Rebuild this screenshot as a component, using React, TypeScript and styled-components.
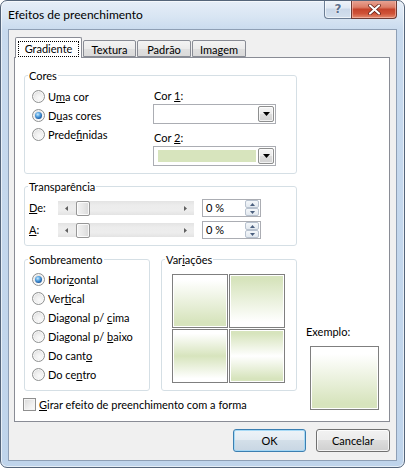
import React from "react";
import styled, { createGlobalStyle } from "styled-components";

const GREEN = "#d7e4bd";

const GlobalStyle = createGlobalStyle`
  html, body { margin: 0; padding: 0; background: #ffffff; }
  body {
    font-family: Lato, "Noto Sans", "Open Sans", sans-serif;
    font-size: 11px;
    color: #000;
  }
  *, *::before, *::after { box-sizing: border-box; }
`;

const Window = styled.div`
  width: 405px;
  height: 468px;
  border: 1px solid #55657a;
  border-radius: 7px;
  background: linear-gradient(180deg, #e6eef8 0px, #d8e5f3 16px, #c8daee 30px, #bfd4eb 100%);
  box-shadow: inset 0 0 0 1px rgba(255, 255, 255, 0.6);
  padding: 0 7px 7px 7px;
  display: flex;
  flex-direction: column;
  overflow: hidden;
`;

const TitleBar = styled.div`
  height: 28px;
  display: flex;
  align-items: flex-start;
`;

const TitleText = styled.div`
  flex: 1;
  line-height: 28px;
  font-size: 12px;
  color: #000;
`;

const CaptionButtons = styled.div`
  display: flex;
  margin-top: -1px;
  height: 19px;
`;

const HelpButton = styled.div`
  width: 27px;
  height: 19px;
  border: 1px solid #6b7d94;
  border-top: none;
  border-right: none;
  border-radius: 0 0 0 4px;
  background: linear-gradient(180deg, #f1f5fa 0%, #dfe8f3 45%, #c9d7e8 50%, #d3e0ee 100%);
  box-shadow: inset 0 0 0 1px rgba(255, 255, 255, 0.6);
  display: flex;
  align-items: center;
  justify-content: center;
  font-family: "DejaVu Sans", sans-serif;
  font-weight: bold;
  font-size: 12px;
  color: #5b6f8b;
  text-shadow: 0 0 1px #fff, 0 0 2px #fff;
`;

const CloseButton = styled.div`
  width: 46px;
  height: 19px;
  border: 1px solid #6e3a33;
  border-top: none;
  border-radius: 0 0 4px 0;
  background: linear-gradient(180deg, #e9a899 0%, #dc7d67 40%, #c5432b 52%, #cf5237 75%, #e38a6e 100%);
  box-shadow: inset 0 0 0 1px rgba(255, 210, 200, 0.5);
  display: flex;
  align-items: center;
  justify-content: center;
`;

const Client = styled.div`
  flex: 1;
  background: #f0f0f0;
  border: 1px solid #8e9fb5;
  padding: 7px 6px 8px 5px;
  display: flex;
  flex-direction: column;
`;

const TabRow = styled.div`
  height: 20px;
  display: flex;
  align-items: flex-end;
  padding-left: 1px;
  position: relative;
  z-index: 2;
`;

const Tab = styled.div<{ $active?: boolean; $w: number }>`
  width: ${(p) => p.$w}px;
  height: ${(p) => (p.$active ? 21 : 17)}px;
  margin-bottom: ${(p) => (p.$active ? -1 : 0)}px;
  margin-left: ${(p) => (p.$active ? 0 : 1)}px;
  border: 1px solid #898c95;
  border-bottom: ${(p) => (p.$active ? "none" : "1px solid #898c95")};
  border-radius: 2px 2px 0 0;
  background: ${(p) =>
    p.$active ? "#ffffff" : "linear-gradient(180deg, #f3f3f3 0%, #ebebeb 50%, #e0e0e0 50%, #dadada 100%)"};
  display: flex;
  justify-content: center;
  align-items: flex-start;
  padding-top: ${(p) => (p.$active ? 3 : 1)}px;
  line-height: 15px;
  white-space: nowrap;
`;

const FocusLabel = styled.span`
  border: 1px dotted #000;
  padding: 0 6px;
  line-height: 14px;
`;

const Panel = styled.div`
  height: 365px;
  background: #ffffff;
  border: 1px solid #898c95;
  padding: 10px 0 0 9px;
  display: flex;
  flex-direction: column;
  position: relative;
  z-index: 1;
`;

const Group = styled.fieldset<{ $w: number; $h: number; $top?: number }>`
  margin: ${(p) => p.$top ?? 0}px 0 0 0;
  padding: 0;
  width: ${(p) => p.$w}px;
  height: ${(p) => p.$h}px;
  border: 1px solid #d5dfe5;
  border-radius: 3px;
  min-width: 0;
`;

const Legend = styled.legend`
  margin-left: 3px;
  padding: 0 1px;
  line-height: 15px;
`;

const Key = styled.span`
  text-decoration: underline;
`;

const ColorsBody = styled.div`
  display: grid;
  grid-template-columns: 121px 123px;
  padding: 4px 0 0 7px;
`;

const RadioList = styled.div`
  display: flex;
  flex-direction: column;
`;

const RadioRow = styled.div`
  height: 19px;
  display: flex;
  align-items: center;
  gap: 3px;
  white-space: nowrap;
`;

const RadioCircle = styled.span<{ $checked?: boolean }>`
  width: 13px;
  height: 13px;
  flex: none;
  border-radius: 50%;
  border: 1px solid #8f9191;
  background: radial-gradient(circle at 60% 65%, #fafafa 0%, #eeeeee 45%, #cfcfcf 100%);
  box-shadow: inset 0 0 0 1px rgba(255, 255, 255, 0.7);
  display: flex;
  align-items: center;
  justify-content: center;
  &::after {
    content: "";
    width: 7px;
    height: 7px;
    border-radius: 50%;
    background: ${(p) =>
      p.$checked
        ? "radial-gradient(circle at 40% 35%, #cdeafc 0%, #5aa6e2 35%, #1f5fa6 70%, #173f70 100%)"
        : "transparent"};
  }
`;

const ColorColumn = styled.div`
  display: flex;
  flex-direction: column;
  padding-top: 1px;
`;

const FieldLabel = styled.div<{ $gap?: number }>`
  height: 16px;
  line-height: 16px;
  margin-top: ${(p) => p.$gap ?? 0}px;
  padding-left: 1px;
`;

const Combo = styled.div`
  width: 123px;
  height: 20px;
  border: 1px solid #abadb3;
  background: #ffffff;
  display: flex;
  padding: 1px;
  gap: 2px;
`;

const ComboFill = styled.div<{ $color?: string }>`
  flex: 1;
  margin: 2px 0 2px 3px;
  background: ${(p) => p.$color ?? "transparent"};
`;

const ComboButton = styled.div`
  width: 16px;
  border: 1px solid #8e8f8f;
  border-radius: 2px;
  background: linear-gradient(180deg, #f5f5f5 0%, #ebebeb 50%, #dddddd 50%, #d2d2d2 100%);
  box-shadow: inset 0 0 0 1px rgba(255, 255, 255, 0.7);
  display: flex;
  align-items: center;
  justify-content: center;
`;

const TransBody = styled.div`
  display: flex;
  flex-direction: column;
  gap: 4px;
  padding: 5px 0 0 4px;
`;

const TransRow = styled.div`
  height: 18px;
  display: flex;
  align-items: center;
`;

const TransLabel = styled.span`
  width: 29px;
  line-height: 16px;
`;

const Track = styled.div`
  width: 136px;
  height: 14px;
  background: linear-gradient(180deg, #e3e3e3 0%, #ececec 30%, #ededed 70%, #e3e3e3 100%);
  display: flex;
  align-items: center;
`;

const TrackArrow = styled.div`
  width: 17px;
  height: 14px;
  display: flex;
  align-items: center;
  justify-content: center;
`;

const Thumb = styled.div`
  width: 14px;
  height: 15px;
  margin-left: 1px;
  border: 1px solid #979797;
  border-radius: 2px;
  background: linear-gradient(90deg, #f3f3f3 0%, #e8e8e8 50%, #d9d9d9 100%);
  box-shadow: inset 0 0 0 1px rgba(255, 255, 255, 0.8);
`;

const TrackSpace = styled.div`
  flex: 1;
`;

const SpinBox = styled.div`
  width: 59px;
  height: 18px;
  margin-left: 8px;
  border: 1px solid #abadb3;
  background: #ffffff;
  display: flex;
`;

const SpinText = styled.span`
  flex: 1;
  padding-left: 3px;
  line-height: 16px;
`;

const SpinButtons = styled.div`
  width: 15px;
  padding: 0 1px 0 0;
  display: flex;
  flex-direction: column;
`;

const SpinBtn = styled.div`
  flex: 1;
  border: 1px solid #b8c2cf;
  border-radius: 2px;
  background: linear-gradient(180deg, #f4f7fa 0%, #e2e8ef 100%);
  display: flex;
  align-items: center;
  justify-content: center;
`;

const LowerArea = styled.div`
  display: flex;
  align-items: flex-end;
  margin-top: 6px;
`;

const LeftColumn = styled.div`
  display: flex;
  flex-direction: column;
`;

const GroupPair = styled.div`
  display: flex;
  gap: 11px;
`;

const ShadeBody = styled.div`
  display: flex;
  flex-direction: column;
  padding: 3px 0 0 7px;
`;

const VariantGrid = styled.div`
  display: grid;
  grid-template-columns: 56px 56px;
  grid-template-rows: 54px 54px;
  gap: 1px;
  padding: 7px 0 0 10px;
`;

const Swatch = styled.div<{ $fill: string }>`
  border: 1px solid #7f7f7f;
  padding: 1px;
  background: #ffffff;
  &::before {
    content: "";
    display: block;
    width: 100%;
    height: 100%;
    background: ${(p) => p.$fill};
  }
`;

const CheckRow = styled.div`
  height: 13px;
  margin-top: 7px;
  margin-left: -1px;
  display: flex;
  align-items: center;
  gap: 3px;
  white-space: nowrap;
`;

const CheckBox = styled.span`
  width: 13px;
  height: 13px;
  border: 1px solid #8f8f8f;
  background: linear-gradient(135deg, #d8d8d8 0%, #f0f0f0 60%, #fbfbfb 100%);
  box-shadow: inset 0 0 0 1px #f4f4f4;
`;

const ExampleColumn = styled.div`
  display: flex;
  flex-direction: column;
  margin-left: 9px;
  margin-bottom: 1px;
`;

const ExampleLabel = styled.div`
  line-height: 15px;
`;

const ExampleBox = styled.div`
  width: 69px;
  height: 64px;
  margin: 7px 0 0 4px;
  border: 1px solid #7f7f7f;
  padding: 1px;
  background: #fff;
  &::before {
    content: "";
    display: block;
    width: 100%;
    height: 100%;
    background: linear-gradient(180deg, #ffffff 10%, ${GREEN} 92%);
  }
`;

const ButtonRow = styled.div`
  margin-top: 7px;
  display: flex;
  justify-content: flex-end;
  gap: 10px;
`;

const DialogButton = styled.div<{ $default?: boolean; $w: number }>`
  width: ${(p) => p.$w}px;
  height: 23px;
  border: 1px solid ${(p) => (p.$default ? "#3c7fb1" : "#707070")};
  border-radius: 3px;
  background: ${(p) =>
    p.$default
      ? "linear-gradient(180deg, #edf3f8 0%, #e3ebf2 50%, #d3dfe9 50%, #c8d6e3 100%)"
      : "linear-gradient(180deg, #f2f2f2 0%, #ebebeb 50%, #dddddd 50%, #cfcfcf 100%)"};
  box-shadow: inset 0 0 0 1px ${(p) => (p.$default ? "rgba(160, 215, 245, 0.9)" : "rgba(255, 255, 255, 0.75)")};
  display: flex;
  align-items: center;
  justify-content: center;
  line-height: 15px;
`;

const DownArrow = () => (
  <svg width="7" height="4" viewBox="0 0 7 4">
    <path d="M0 0 H7 L3.5 4 Z" fill="#000" />
  </svg>
);

const SideArrow = ({ dir }: { dir: "left" | "right" }) => (
  <svg width="3" height="5" viewBox="0 0 3 5">
    <path d={dir === "left" ? "M3 0 V5 L0 2.5 Z" : "M0 0 V5 L3 2.5 Z"} fill="#606060" />
  </svg>
);

const SpinArrow = ({ dir }: { dir: "up" | "down" }) => (
  <svg width="5" height="3" viewBox="0 0 5 3">
    <path d={dir === "up" ? "M0 3 H5 L2.5 0 Z" : "M0 0 H5 L2.5 3 Z"} fill="#4a5f7e" />
  </svg>
);

const CloseGlyph = () => (
  <svg width="13" height="11" viewBox="0 0 13 11">
    <path d="M2 1.5 L11 9.5 M11 1.5 L2 9.5" stroke="#5a1a12" strokeWidth="3.6" strokeLinecap="round" />
    <path d="M2 1.5 L11 9.5 M11 1.5 L2 9.5" stroke="#ffffff" strokeWidth="2.2" strokeLinecap="round" />
  </svg>
);

const Radio = ({ checked, children }: { checked?: boolean; children: React.ReactNode }) => (
  <RadioRow>
    <RadioCircle $checked={checked} />
    <span>{children}</span>
  </RadioRow>
);

const TransparencyRow = ({ label }: { label: React.ReactNode }) => (
  <TransRow>
    <TransLabel>{label}</TransLabel>
    <Track>
      <TrackArrow>
        <SideArrow dir="left" />
      </TrackArrow>
      <Thumb />
      <TrackSpace />
      <TrackArrow>
        <SideArrow dir="right" />
      </TrackArrow>
    </Track>
    <SpinBox>
      <SpinText>0 %</SpinText>
      <SpinButtons>
        <SpinBtn>
          <SpinArrow dir="up" />
        </SpinBtn>
        <SpinBtn>
          <SpinArrow dir="down" />
        </SpinBtn>
      </SpinButtons>
    </SpinBox>
  </TransRow>
);

const variants = [
  `linear-gradient(180deg, #ffffff 8%, ${GREEN} 92%)`,
  `linear-gradient(180deg, ${GREEN} 8%, #ffffff 92%)`,
  `linear-gradient(180deg, #ffffff 5%, ${GREEN} 50%, #ffffff 95%)`,
  `linear-gradient(180deg, ${GREEN} 5%, #ffffff 50%, ${GREEN} 95%)`,
];

export default function App() {
  return (
    <>
      <GlobalStyle />
      <Window>
        <TitleBar>
          <TitleText>Efeitos de preenchimento</TitleText>
          <CaptionButtons>
            <HelpButton>?</HelpButton>
            <CloseButton>
              <CloseGlyph />
            </CloseButton>
          </CaptionButtons>
        </TitleBar>
        <Client>
          <TabRow>
            <Tab $active $w={67}>
              <FocusLabel>Gradiente</FocusLabel>
            </Tab>
            <Tab $w={53}>Textura</Tab>
            <Tab $w={54}>Padrão</Tab>
            <Tab $w={54}>Imagem</Tab>
          </TabRow>
          <Panel>
            <Group $w={273} $h={106}>
              <Legend>Cores</Legend>
              <ColorsBody>
                <RadioList>
                  <Radio>
                    U<Key>m</Key>a cor
                  </Radio>
                  <Radio checked>
                    D<Key>u</Key>as cores
                  </Radio>
                  <Radio>
                    Prede<Key>f</Key>inidas
                  </Radio>
                </RadioList>
                <ColorColumn>
                  <FieldLabel>
                    Cor <Key>1</Key>:
                  </FieldLabel>
                  <Combo>
                    <ComboFill />
                    <ComboButton>
                      <DownArrow />
                    </ComboButton>
                  </Combo>
                  <FieldLabel $gap={6}>
                    Cor <Key>2</Key>:
                  </FieldLabel>
                  <Combo>
                    <ComboFill $color={GREEN} />
                    <ComboButton>
                      <DownArrow />
                    </ComboButton>
                  </Combo>
                </ColorColumn>
              </ColorsBody>
            </Group>

            <Group $w={273} $h={67} $top={5}>
              <Legend>Transparência</Legend>
              <TransBody>
                <TransparencyRow
                  label={
                    <>
                      <Key>D</Key>e:
                    </>
                  }
                />
                <TransparencyRow
                  label={
                    <>
                      <Key>A</Key>:
                    </>
                  }
                />
              </TransBody>
            </Group>

            <LowerArea>
              <LeftColumn>
                <GroupPair>
                  <Group $w={126} $h={139}>
                    <Legend>Sombreamento</Legend>
                    <ShadeBody>
                      <Radio checked>
                        Hori<Key>z</Key>ontal
                      </Radio>
                      <Radio>
                        Ver<Key>t</Key>ical
                      </Radio>
                      <Radio>
                        Diagonal p/ <Key>c</Key>ima
                      </Radio>
                      <Radio>
                        Diagonal p/ <Key>b</Key>aixo
                      </Radio>
                      <Radio>
                        Do cant<Key>o</Key>
                      </Radio>
                      <Radio>
                        Do ce<Key>n</Key>tro
                      </Radio>
                    </ShadeBody>
                  </Group>
                  <Group $w={136} $h={139}>
                    <Legend>
                      Var<Key>i</Key>ações
                    </Legend>
                    <VariantGrid>
                      {variants.map((v, i) => (
                        <Swatch key={i} $fill={v} />
                      ))}
                    </VariantGrid>
                  </Group>
                </GroupPair>
                <CheckRow>
                  <CheckBox />
                  <span>
                    <Key>G</Key>irar efeito de preenchimento com a forma
                  </span>
                </CheckRow>
              </LeftColumn>
              <ExampleColumn>
                <ExampleLabel>Exemplo:</ExampleLabel>
                <ExampleBox />
              </ExampleColumn>
            </LowerArea>
          </Panel>
          <ButtonRow>
            <DialogButton $default $w={73}>
              OK
            </DialogButton>
            <DialogButton $w={74}>Cancelar</DialogButton>
          </ButtonRow>
        </Client>
      </Window>
    </>
  );
}
